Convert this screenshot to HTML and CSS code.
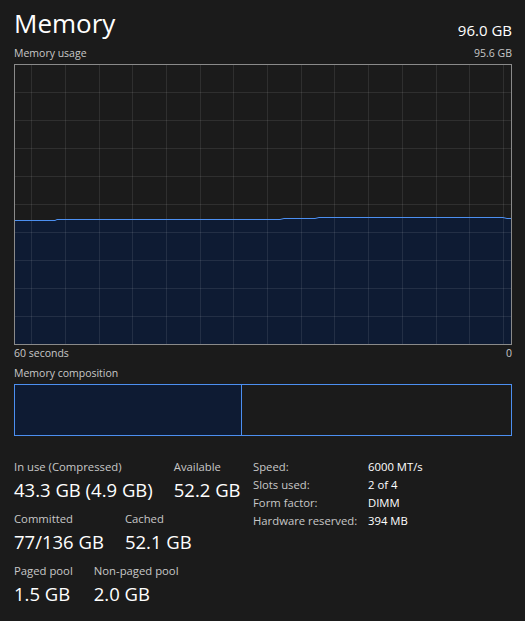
FILE: index.html
```html
<!DOCTYPE html>
<html lang="en">
<head>
    <meta charset="UTF-8">
    <meta name="viewport" content="width=device-width, initial-scale=1.0">
    <title>Memory</title>
    <link rel="stylesheet" href="styles.css">
</head>
<body>
    <div class="page">
        <div class="header">
            <div class="title">Memory</div>
            <div class="total">96.0 GB</div>
        </div>

        <div class="caption-row usage-label">
            <span>Memory usage</span>
            <span>95.6 GB</span>
        </div>

        <!-- usage graph, 60 second window -->
        <svg class="chart" width="498" height="281" viewBox="0 0 498 281">
            <rect x="0" y="0" width="498" height="281" fill="#1b1b1b"/>
            <polygon points="0.5,156.5 41,156.5 43,155.5 266,155.5 270,154.5 301,154.5 305,153.5 489,153.5 493,154.5 497.5,154.5 497.5,280 0.5,280" fill="#0e1b33"/>
            <g stroke="rgba(255,255,255,0.09)" stroke-width="1">
                <line x1="17.5" y1="0" x2="17.5" y2="281"/>
                <line x1="51.5" y1="0" x2="51.5" y2="281"/>
                <line x1="85.5" y1="0" x2="85.5" y2="281"/>
                <line x1="118.5" y1="0" x2="118.5" y2="281"/>
                <line x1="152.5" y1="0" x2="152.5" y2="281"/>
                <line x1="186.5" y1="0" x2="186.5" y2="281"/>
                <line x1="219.5" y1="0" x2="219.5" y2="281"/>
                <line x1="253.5" y1="0" x2="253.5" y2="281"/>
                <line x1="287.5" y1="0" x2="287.5" y2="281"/>
                <line x1="320.5" y1="0" x2="320.5" y2="281"/>
                <line x1="354.5" y1="0" x2="354.5" y2="281"/>
                <line x1="388.5" y1="0" x2="388.5" y2="281"/>
                <line x1="422.5" y1="0" x2="422.5" y2="281"/>
                <line x1="455.5" y1="0" x2="455.5" y2="281"/>
                <line x1="489.5" y1="0" x2="489.5" y2="281"/>
                <line x1="0" y1="28.5" x2="498" y2="28.5"/>
                <line x1="0" y1="56.5" x2="498" y2="56.5"/>
                <line x1="0" y1="84.5" x2="498" y2="84.5"/>
                <line x1="0" y1="112.5" x2="498" y2="112.5"/>
                <line x1="0" y1="140.5" x2="498" y2="140.5"/>
                <line x1="0" y1="168.5" x2="498" y2="168.5"/>
                <line x1="0" y1="196.5" x2="498" y2="196.5"/>
                <line x1="0" y1="224.5" x2="498" y2="224.5"/>
                <line x1="0" y1="252.5" x2="498" y2="252.5"/>
            </g>
            <polyline points="0.5,280 0.5,156.5 41,156.5 43,155.5 266,155.5 270,154.5 301,154.5 305,153.5 489,153.5 493,154.5 497.5,154.5" fill="none" stroke="#4c8ff0" stroke-width="1"/>
            <rect x="0.5" y="0.5" width="497" height="280" fill="none" stroke="#8a8a8a" stroke-width="1"/>
        </svg>

        <div class="caption-row axis">
            <span>60 seconds</span>
            <span>0</span>
        </div>

        <div class="caption-row composition-label">
            <span>Memory composition</span>
        </div>

        <div class="composition">
            <div class="comp-used"></div>
            <div class="comp-free"></div>
        </div>

        <div class="stats">
            <div class="stats-left">
                <div class="stat-row">
                    <div class="stat">
                        <div class="stat-label">In use (Compressed)</div>
                        <div class="stat-value">43.3 GB (4.9 GB)</div>
                    </div>
                    <div class="stat">
                        <div class="stat-label">Available</div>
                        <div class="stat-value">52.2 GB</div>
                    </div>
                </div>
                <div class="stat-row">
                    <div class="stat">
                        <div class="stat-label">Committed</div>
                        <div class="stat-value">77/136 GB</div>
                    </div>
                    <div class="stat">
                        <div class="stat-label">Cached</div>
                        <div class="stat-value">52.1 GB</div>
                    </div>
                </div>
                <div class="stat-row">
                    <div class="stat">
                        <div class="stat-label">Paged pool</div>
                        <div class="stat-value">1.5 GB</div>
                    </div>
                    <div class="stat">
                        <div class="stat-label">Non-paged pool</div>
                        <div class="stat-value">2.0 GB</div>
                    </div>
                </div>
            </div>

            <table class="specs">
                <tr><td>Speed:</td><td>6000 MT/s</td></tr>
                <tr><td>Slots used:</td><td>2 of 4</td></tr>
                <tr><td>Form factor:</td><td>DIMM</td></tr>
                <tr><td>Hardware reserved:</td><td>394 MB</td></tr>
            </table>
        </div>
    </div>
</body>
</html>
```

FILE: styles.css
```css
body {
    margin: 0;
    padding: 0;
    background-color: #1b1b1b;
    color: #ffffff;
    font-family: "Open Sans", "Noto Sans", sans-serif;
}

.page {
    width: 498px;
    padding: 0 14px;
}

.header {
    display: flex;
    justify-content: space-between;
    align-items: flex-end;
    padding-top: 6px;
}

.title {
    font-size: 26px;
    line-height: 34px;
}

.total {
    font-size: 15px;
    line-height: 20px;
}

.caption-row {
    display: flex;
    justify-content: space-between;
    font-size: 10.5px;
    line-height: 16px;
    color: #c8c8c8;
}

.usage-label {
    margin-top: 5px;
}

.chart {
    display: block;
    margin-top: 3px;
}

.composition-label {
    margin-top: 4px;
}

.composition {
    display: flex;
    height: 52px;
    margin-top: 3px;
    border: 1px solid #4c8ff0;
    box-sizing: border-box;
}

.comp-used {
    width: 226px;
    background-color: #0e1b33;
    border-right: 1px solid #4c8ff0;
}

.comp-free {
    flex: 1;
}

.stats {
    display: flex;
    align-items: flex-start;
    margin-top: 22px;
}

.stats-left {
    width: 239px;
}

.stat-row {
    display: flex;
    gap: 21px;
    margin-bottom: 6px;
}

.stat-label {
    font-size: 11.3px;
    line-height: 18px;
    color: #c8c8c8;
}

.stat-value {
    font-size: 18.5px;
    line-height: 28px;
}

.specs {
    border-collapse: collapse;
    font-size: 11.3px;
    color: #ffffff;
}

.specs td {
    padding: 0;
    line-height: 18px;
    vertical-align: top;
}

.specs td:first-child {
    width: 115px;
    color: #c8c8c8;
}
```
